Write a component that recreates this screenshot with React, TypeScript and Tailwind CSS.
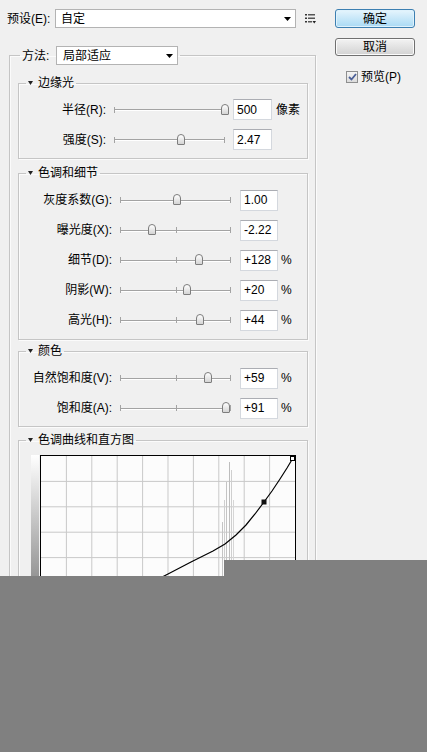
import React from 'react';

const FONT = "font-['Liberation_Sans','Noto_Sans_CJK_SC',sans-serif]";

const DownArrow = () => (
  <svg width="7" height="4" viewBox="0 0 7 4" className="shrink-0">
    <path d="M0 0H7L3.5 4Z" fill="#000" />
  </svg>
);

const MenuIcon = () => (
  <svg width="11" height="10" viewBox="0 0 11 10" className="ml-[9px] shrink-0">
    <rect x="0" y="0" width="2" height="1.5" fill="#333" />
    <rect x="3" y="0" width="7" height="1.5" fill="#555" />
    <rect x="0" y="3.5" width="2" height="1.5" fill="#333" />
    <rect x="3" y="3.5" width="7" height="1.5" fill="#555" />
    <rect x="0" y="7" width="2" height="1.5" fill="#333" />
    <rect x="3" y="7" width="4" height="1.5" fill="#555" />
    <path d="M7.5 7H11L9.25 9.5Z" fill="#222" />
  </svg>
);

interface SliderProps {
  pos: number;
  center?: number | null;
}

const Slider: React.FC<SliderProps> = ({ pos, center }) => (
  <div className="relative flex h-[20px] w-[111px] shrink-0 items-center">
    <div className="h-px w-full bg-[#a3a3a3] shadow-[0_1px_0_#ffffff]" />
    <div className="absolute left-0 top-[7px] h-[6px] w-px bg-[#a3a3a3]" />
    <div className="absolute right-0 top-[7px] h-[6px] w-px bg-[#a3a3a3]" />
    {center != null && (
      <div className="absolute top-[7px] h-[6px] w-px bg-[#a3a3a3]" style={{ left: center }} />
    )}
    <div
      className="absolute top-[4px] h-[11px] w-[8px] rounded-t-[4px] rounded-b-[1px] border border-[#7d7d7d] bg-gradient-to-b from-white to-[#d4d4d4]"
      style={{ left: pos - 4 }}
    />
  </div>
);

interface RowProps {
  label: string;
  value: string;
  pos: number;
  unit?: string;
  center?: number | null;
}

// first group is shifted 6px left compared to the others
const EdgeRow: React.FC<RowProps> = ({ label, value, pos, unit }) => (
  <div className="flex h-[21px] items-center text-[12px]">
    <span className="w-[87px] shrink-0 text-right leading-[14px]">{label}</span>
    <div className="ml-[8px]">
      <Slider pos={pos} center={null} />
    </div>
    <div className="ml-[8px] flex h-[21px] w-[39px] shrink-0 items-center border border-[#d4d8de] border-t-[#abadb3] bg-white pl-[3px] leading-[14px]">
      {value}
    </div>
    {unit && <span className="ml-[4px] text-[12px] leading-[14px]">{unit}</span>}
  </div>
);

const Row: React.FC<RowProps> = ({ label, value, pos, unit, center = 56 }) => (
  <div className="flex h-[20px] items-center text-[12px]">
    <span className="w-[93px] shrink-0 text-right leading-[14px]">{label}</span>
    <div className="ml-[8px]">
      <Slider pos={pos} center={center} />
    </div>
    <div className="ml-[9px] flex h-[21px] w-[38px] shrink-0 items-center border border-[#d4d8de] border-t-[#abadb3] bg-white pl-[3px] leading-[14px]">
      {value}
    </div>
    {unit && <span className="ml-[3px] leading-[14px]">{unit}</span>}
  </div>
);

interface GroupProps {
  title: string;
  className?: string;
  children: React.ReactNode;
}

const Group: React.FC<GroupProps> = ({ title, className, children }) => (
  <fieldset
    className={`ml-[8px] w-[290px] border border-[#c5c5c5] shadow-[inset_1px_1px_0_#fbfbfb,1px_1px_0_#fbfbfb] ${className ?? ''}`}
  >
    <legend className="ml-[7px] px-[2px]">
      <span className="flex h-[16px] items-center text-[12px] leading-[16px]">
        <svg width="5" height="4" viewBox="0 0 5 4" className="mr-[5px]">
          <path d="M0 0H5L2.5 4Z" fill="#222" />
        </svg>
        {title}
      </span>
    </legend>
    {children}
  </fieldset>
);

const Curve = () => {
  const grid = [1, 2, 3, 4, 5, 6, 7, 8, 9].map((i) => i * 25.4);
  const pts =
    '0,254 40,190 80,150 100,132 127,118 150,106 172,95 184,88 195,79 205,69 214,58 223,46 231,35 239,23 246,12 252,2';
  return (
    <svg width="254" height="254" viewBox="0 0 254 254" className="block">
      <rect width="254" height="254" fill="#fcfcfc" />
      {grid.map((g) => (
        <g key={g}>
          <line x1={g} y1="0" x2={g} y2="254" stroke="#c9c9c9" strokeWidth="1" />
          <line x1="0" y1={g} x2="254" y2={g} stroke="#c9c9c9" strokeWidth="1" />
        </g>
      ))}
      <line x1="181.5" y1="66" x2="181.5" y2="254" stroke="#c4c4c4" />
      <line x1="183.5" y1="44" x2="183.5" y2="254" stroke="#cfcfcf" />
      <line x1="185.5" y1="26" x2="185.5" y2="254" stroke="#c4c4c4" />
      <line x1="188.5" y1="6" x2="188.5" y2="254" stroke="#bdbdbd" />
      <line x1="190.5" y1="14" x2="190.5" y2="254" stroke="#cfcfcf" />
      <line x1="192.5" y1="44" x2="192.5" y2="254" stroke="#d6d6d6" />
      <polyline points={pts} fill="none" stroke="#000" strokeWidth="1.2" />
      <rect x="220.5" y="43.5" width="5" height="5" fill="#111" />
      <rect x="249.5" y="0.5" width="4" height="4" fill="#fff" stroke="#000" strokeWidth="1" />
    </svg>
  );
};

export default function App() {
  return (
    <div className={`relative h-[752px] w-[427px] overflow-hidden bg-[#808080] text-black ${FONT}`}>
      <div className="flex h-[576px] overflow-hidden bg-[#f0f0f0]">
        {/* left column */}
        <div className="w-[316px] shrink-0 pt-[9px]">
          <div className="flex h-[19px] items-center">
            <span className="w-[55px] shrink-0 pl-[7px] text-[12px] leading-[14px]">预设(E):</span>
            <div className="flex h-[19px] w-[241px] shrink-0 items-center justify-between border border-[#b3b3b3] bg-white pl-[5px] pr-[4px] text-[12px] leading-[14px]">
              <span>自定</span>
              <DownArrow />
            </div>
            <MenuIcon />
          </div>

          <fieldset className="ml-[9px] mt-[18px] w-[307px] border border-[#c5c5c5] shadow-[inset_1px_1px_0_#fbfbfb,1px_1px_0_#fbfbfb]">
            <legend className="ml-[10px] px-[2px]">
              <span className="flex h-[19px] items-center text-[12px] leading-[14px]">
                <span className="w-[34px]">方法:</span>
                <span className="flex h-[19px] w-[122px] items-center justify-between border border-[#b3b3b3] bg-white pl-[6px] pr-[4px]">
                  <span>局部适应</span>
                  <DownArrow />
                </span>
              </span>
            </legend>

            <Group title="边缘光" className="mt-[10px] px-0 pb-[8px] pt-[8px]">
              <div className="flex flex-col gap-[9px]">
                <EdgeRow label="半径(R):" value="500" pos={111} unit="像素" />
                <EdgeRow label="强度(S):" value="2.47" pos={67} />
              </div>
            </Group>

            <Group title="色调和细节" className="mt-[6px] pb-[9px] pt-[9px]">
              <div className="flex flex-col gap-[10px]">
                <Row label="灰度系数(G):" value="1.00" pos={57} center={null} />
                <Row label="曝光度(X):" value="-2.22" pos={32} />
                <Row label="细节(D):" value="+128" pos={79} unit="%" />
                <Row label="阴影(W):" value="+20" pos={67} unit="%" />
                <Row label="高光(H):" value="+44" pos={80} unit="%" />
              </div>
            </Group>

            <Group title="颜色" className="mt-[3px] pb-[8px] pt-[9px]">
              <div className="flex flex-col gap-[10px]">
                <Row label="自然饱和度(V):" value="+59" pos={88} unit="%" />
                <Row label="饱和度(A):" value="+91" pos={106} unit="%" />
              </div>
            </Group>

            <Group title="色调曲线和直方图" className="mt-[5px] pb-[12px] pt-[7px]">
              <div className="flex">
                <div className="ml-[12px] h-[256px] w-[8px] bg-gradient-to-b from-white to-[#303030]" />
                <div className="ml-px border border-black">
                  <Curve />
                </div>
              </div>
              <div className="ml-[21px] mt-[2px] h-[8px] w-[256px] bg-gradient-to-r from-[#303030] to-white" />
            </Group>
          </fieldset>
        </div>

        {/* right column */}
        <div className="flex flex-col pl-[19px] pt-[9px] text-[12px]">
          <button className="flex h-[19px] w-[80px] items-center justify-center rounded-[3px] border border-[#3c7fb1] bg-gradient-to-b from-[#e6f5fd] to-[#a9daf4] leading-[14px] shadow-[inset_0_0_0_1px_#dff2fc]">
            确定
          </button>
          <button className="mt-[10px] flex h-[18px] w-[80px] items-center justify-center rounded-[3px] border border-[#707070] bg-gradient-to-b from-[#f3f3f3] to-[#d2d2d2] leading-[14px] shadow-[inset_0_0_0_1px_#fbfbfb]">
            取消
          </button>
          <div className="ml-[11px] mt-[15px] flex h-[12px] items-center">
            <span className="flex h-[12px] w-[12px] items-center justify-center border border-[#8e8f8f] bg-gradient-to-b from-[#f4f4f4] to-[#dcdcdc]">
              <svg width="9" height="8" viewBox="0 0 9 8">
                <path d="M1 4L3.5 6.5L8 1" fill="none" stroke="#4a5f97" strokeWidth="1.8" />
              </svg>
            </span>
            <span className="ml-[3px] leading-[14px]">预览(P)</span>
          </div>
        </div>
      </div>

      {/* grey cover over the lower right part of the capture */}
      <div className="absolute left-[224px] top-[560px] h-[16px] w-[203px] bg-[#808080]" />
    </div>
  );
}
